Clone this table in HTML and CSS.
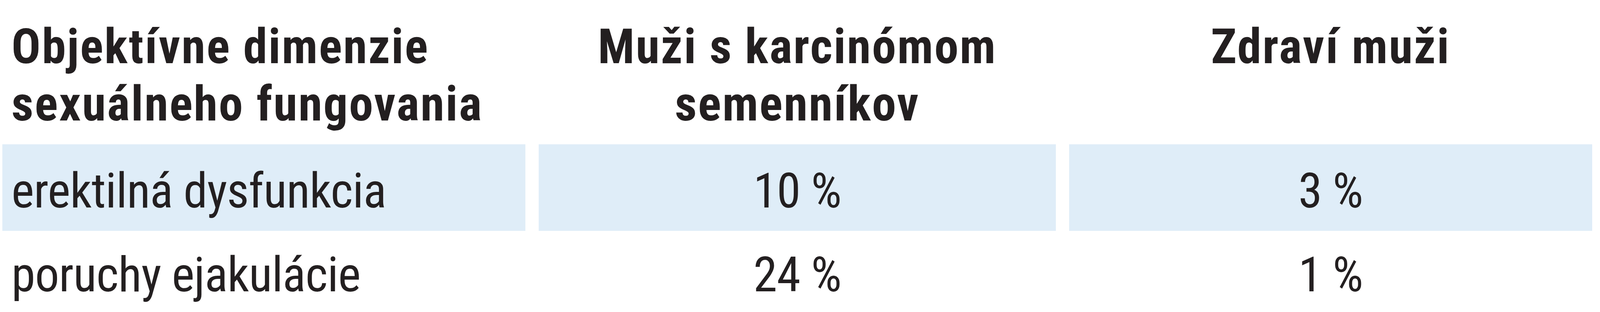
FILE: index.html
```html
<!DOCTYPE html>
<html lang="sk">
<head>
<meta charset="utf-8">
<title>Objektívne dimenzie sexuálneho fungovania</title>
<link rel="stylesheet" href="styles.css">
</head>
<body>
<div class="table">
  <div class="row row-head">
    <div class="cell cell-label">Objektívne dimenzie<br>sexuálneho fungovania</div>
    <div class="cell cell-value">Muži s karcinómom<br>semenníkov</div>
    <div class="cell cell-value">Zdraví muži</div>
  </div>
  <div class="row row-shaded">
    <div class="cell cell-label">erektilná dysfunkcia</div>
    <div class="cell cell-value">10 %</div>
    <div class="cell cell-value">3 %</div>
  </div>
  <div class="row row-plain">
    <div class="cell cell-label">poruchy ejakulácie</div>
    <div class="cell cell-value">24 %</div>
    <div class="cell cell-value">1 %</div>
  </div>
</div>
</body>
</html>
```

FILE: styles.css
```css
html, body {
  margin: 0;
  padding: 0;
  background: #ffffff;
}

body {
  font-family: Roboto, "Open Sans", "Liberation Sans", sans-serif;
  font-stretch: condensed;
  font-size: 124px;
  line-height: 147px;
  color: #231f20;
  height: 800px;
  overflow: hidden;
}

.table {
  padding-left: 0.157vw;
}

.row {
  display: grid;
  grid-template-columns: 32.684vw 32.326vw 32.684vw;
  column-gap: 0.828vw;
}

.cell {
  white-space: nowrap;
  letter-spacing: -1px;
}

.cell-label {
  padding-left: 0.56vw;
  text-align: left;
}

.cell-value {
  text-align: center;
}

.row-head .cell {
  font-weight: 700;
  letter-spacing: 3px;
  padding-top: 46px;
  padding-bottom: 30px;
}

.row-shaded .cell {
  background: #dfedf8;
  padding-top: 46px;
  padding-bottom: 29px;
}

.row-plain .cell {
  padding-top: 39px;
}
```
